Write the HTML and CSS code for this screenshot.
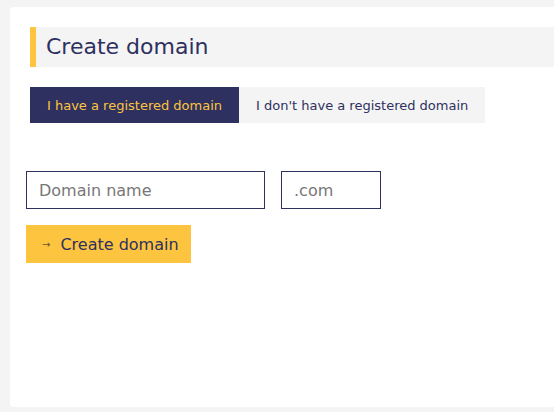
FILE: index.html
```html
<!DOCTYPE html>
<html lang="en">

<head>
    <meta charset="UTF-8">
    <meta name="viewport" content="width=device-width, initial-scale=1.0">
    <title>Create domain</title>
    <link rel="stylesheet" href="styles.css">
</head>

<body>

    <div class="card">
        <h1 class="title">Create domain</h1>

        <!-- Tabs -->
        <div class="tabs">
            <button class="tab active">I have a registered domain</button>
            <button class="tab">I don't have a registered domain</button>
        </div>

        <form class="domain-form">
            <div class="fields">
                <input type="text" class="name-input" placeholder="Domain name">
                <input type="text" class="tld-input" placeholder=".com">
            </div>

            <button type="submit" class="submit">
                <span class="arrow">&rarr;</span>
                <span>Create domain</span>
            </button>
        </form>
    </div>

</body>

</html>
```

FILE: styles.css
```css
/* General Styles */
* {
    margin: 0;
    padding: 0;
    box-sizing: border-box;
}

body {
    font-family: 'DejaVu Sans', Verdana, sans-serif;
    background-color: #f4f4f4;
    height: 100vh;
    overflow: hidden;
    padding: 7px 0 5px 10px;
}

.card {
    background-color: #fff;
    border-radius: 4px 0 0 4px;
    height: 100%;
    padding: 20px 0 0 20px;
}

.title {
    background-color: #f4f4f4;
    border-left: 6px solid #fdc43f;
    color: #2e3060;
    font-size: 22px;
    font-weight: normal;
    height: 40px;
    line-height: 40px;
    padding-left: 10px;
}

.tabs {
    display: flex;
    margin-top: 20px;
}

.tab {
    border: none;
    font-family: inherit;
    font-size: 13px;
    height: 36px;
    padding: 0 17px;
    background-color: #f4f4f4;
    color: #2e3060;
}

.tab.active {
    background-color: #2e3060;
    color: #fdc43f;
}

.domain-form {
    margin: 48px 0 0 -4px;
}

.fields {
    display: flex;
    gap: 16px;
}

.fields input {
    height: 38px;
    border: 1px solid #2e3060;
    font-family: inherit;
    font-size: 16px;
    padding: 0 12px;
    color: #2e3060;
}

.fields input::placeholder {
    color: #777;
}

.name-input {
    width: 239px;
}

.tld-input {
    width: 100px;
}

.submit {
    margin-top: 16px;
    height: 38px;
    width: 165px;
    border: none;
    background-color: #fdc43f;
    color: #2e3060;
    font-family: inherit;
    font-size: 16px;
    display: flex;
    align-items: center;
    padding-left: 16px;
}

.submit .arrow {
    font-size: 10px;
    margin-right: 10px;
    color: #6a5530;
}
```
